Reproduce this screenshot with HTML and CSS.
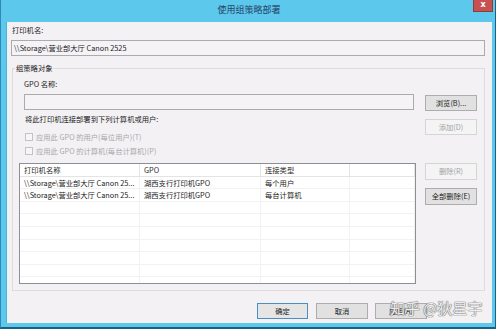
FILE: index.html
```html
<!DOCTYPE html>
<html lang="zh-CN">
<head>
<meta charset="utf-8">
<title>使用组策略部署</title>
<link rel="stylesheet" href="styles.css">
</head>
<body>
<div class="window">
  <div class="titlebar">
    <span></span>
    <span class="title">使用组策略部署</span>
    <span class="close-wrap"><span class="close">x</span></span>
  </div>
  <div class="content">
    <div class="name-label">打印机名:</div>
    <div class="textbox name-input">\\Storage\营业部大厅 Canon 2525</div>
    <div class="group">
      <span class="group-title">组策略对象</span>
      <div class="gpo-label">GPO 名称:</div>
      <div class="row-a">
        <div class="textbox gpo-input"></div>
        <div class="btn btn-browse">浏览(B)...</div>
      </div>
      <div class="row-b">
        <div class="opts">
          <div class="opts-label">将此打印机连接部署到下列计算机或用户:</div>
          <div class="check first"><span class="box"></span>应用此 GPO 的用户(每位用户)(T)</div>
          <div class="check"><span class="box"></span>应用此 GPO 的计算机(每台计算机)(P)</div>
        </div>
        <div class="btn disabled btn-add">添加(D)</div>
      </div>
      <div class="row-c">
        <div class="list">
          <div class="cell head">打印机名称</div>
          <div class="cell head">GPO</div>
          <div class="cell head">连接类型</div>
          <div class="cell head"></div>
          <div class="cell">\\Storage\营业部大厅 Canon 25...</div>
          <div class="cell">湖西支行打印机GPO</div>
          <div class="cell">每个用户</div>
          <div class="cell"></div>
          <div class="cell">\\Storage\营业部大厅 Canon 25...</div>
          <div class="cell">湖西支行打印机GPO</div>
          <div class="cell">每台计算机</div>
          <div class="cell"></div>
          <div class="cell"></div><div class="cell"></div><div class="cell"></div><div class="cell"></div>
          <div class="cell"></div><div class="cell"></div><div class="cell"></div><div class="cell"></div>
          <div class="cell"></div><div class="cell"></div><div class="cell"></div><div class="cell"></div>
          <div class="cell"></div><div class="cell"></div><div class="cell"></div><div class="cell"></div>
          <div class="cell"></div><div class="cell"></div><div class="cell"></div><div class="cell"></div>
          <div class="cell"></div><div class="cell"></div><div class="cell"></div><div class="cell"></div>
          <div class="cell"></div><div class="cell"></div><div class="cell"></div><div class="cell"></div>
        </div>
        <div class="side">
          <div class="btn disabled tall">删除(R)</div>
          <div class="btn tall second">全部删除(E)</div>
        </div>
      </div>
    </div>
    <div class="footer">
      <div class="btn default w51">确定</div>
      <div class="btn w52 gap8">取消</div>
      <div class="btn w52 gap7">应用(A)</div>
    </div>
  </div>
  <div class="watermark">知乎 @狄星宇</div>
</div>
</body>
</html>
```

FILE: styles.css
```css
* { box-sizing: border-box; }
html, body { margin: 0; padding: 0; background: #ffffff; }
body {
  font-family: "Noto Sans CJK SC", "Noto Sans", sans-serif;
  font-size: 7.3px;
  color: #1b1b1b;
}
.window {
  position: relative;
  width: 496px;
  height: 329px;
  background: #5cc8ec;
  border-left: 1px solid #2f88b8;
  border-right: 1px solid #1f5f86;
  border-bottom: 2px solid #1f5f86;
  padding: 0 3px 4px 5px;
  display: flex;
  flex-direction: column;
}
.titlebar {
  height: 22px;
  flex: none;
  display: grid;
  grid-template-columns: 1fr auto 1fr;
  align-items: start;
}
.title {
  font-size: 9px;
  line-height: 19px;
  color: #24436a;
}
.close-wrap { display: flex; justify-content: flex-end; margin-right: -1px; }
.close {
  width: 20px;
  height: 12px;
  background: #c75050;
  border: 1px solid #8e3b3b;
  border-top: none;
  color: #ffffff;
  font-family: "DejaVu Sans", sans-serif;
  font-weight: bold;
  font-size: 8px;
  line-height: 10px;
  text-align: center;
}
.content {
  flex: 1;
  background: #f4f1f5;
  border-left: 1px solid #4fb2da;
  padding: 0 7px 0 4px;
  display: flex;
  flex-direction: column;
}
.name-label { margin-top: 2px; line-height: 12px; padding-left: 1px; }
.textbox {
  height: 16px;
  border: 1px solid #ababab;
  background: #f6f3f7;
  line-height: 14px;
  padding-left: 2px;
  white-space: nowrap;
}
.name-input { margin-top: 4px; }
.group {
  margin: 12px 0 0 1px;
  border: 1px solid #dedbe0;
  padding: 0 7px 6px 6px;
  display: flex;
  flex-direction: column;
}
.group-title {
  align-self: flex-start;
  margin-top: -7px;
  margin-left: -4px;
  padding: 0 1px;
  line-height: 12px;
  background: #f4f1f5;
}
.gpo-label { margin-top: 4px; margin-left: 5px; line-height: 12px; }
.row-a { margin-top: 4px; padding-left: 5px; display: flex; gap: 11px; }
.gpo-input { width: 390px; }
.btn {
  width: 52px;
  height: 16px;
  border: 1px solid #adadad;
  background: #e1e1e1;
  text-align: center;
  line-height: 14px;
  white-space: nowrap;
  flex: none;
}
.btn.disabled { background: #f4f4f4; border-color: #d5d5d5; color: #a3a3a3; }
.btn.default { border-color: #4a8fc4; background: #e5e5e5; }
.btn-browse { margin-top: 1px; }
.row-b { display: flex; justify-content: space-between; padding-left: 5px; }
.opts { padding-left: 1px; }
.opts-label { margin-top: 2px; line-height: 12px; }
.check { height: 14px; line-height: 14px; color: #a8a8a8; display: flex; align-items: center; }
.check.first { margin-top: 5px; }
.box {
  width: 8px;
  height: 8px;
  border: 1px solid #c3c3c3;
  background: #f6f6f6;
  margin-right: 3px;
}
.btn-add { margin-top: 8px; }
.row-c { margin-top: 5px; display: flex; gap: 9px; }
.list {
  width: 397px;
  height: 121px;
  border: 1px solid #8c8f96;
  background: #ffffff;
  display: grid;
  grid-template-columns: 120px 121px 89px 1fr;
  grid-auto-rows: 12.6px;
  align-content: start;
  overflow: hidden;
}
.cell {
  border-right: 1px solid #f2f2f2;
  border-bottom: 1px solid #f2f2f2;
  padding-left: 4px;
  line-height: 12px;
  white-space: nowrap;
  overflow: hidden;
}
.cell.head { border-right-color: #e4e4e4; border-bottom-color: #e4e4e4; color: #2a2a2a; }
.side { display: flex; flex-direction: column; }
.btn.tall { height: 17px; line-height: 15px; }
.btn.second { margin-top: 8px; }
.footer { margin-top: 12px; display: flex; justify-content: flex-end; padding-right: 58px; }
.w51 { width: 51px; }
.w52 { width: 52px; }
.gap8 { margin-left: 8px; }
.gap7 { margin-left: 7px; }
.watermark {
  position: absolute;
  left: 389px;
  top: 299px;
  font-size: 15px;
  line-height: 17px;
  color: rgba(255, 255, 255, 0.9);
  text-shadow: 0 0 1px #707070, 0 0 1px #707070, 0 0 1px #707070;
  white-space: nowrap;
}
```
